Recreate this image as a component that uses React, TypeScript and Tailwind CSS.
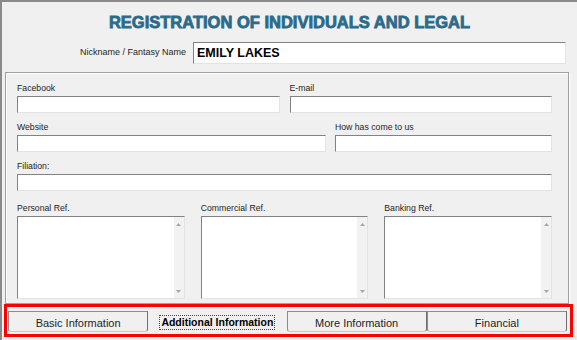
import type { ReactNode } from 'react';

const sunken =
  'bg-white border border-t-[#828282] border-l-[#828282] border-r-[#e3e3e3] border-b-[#e3e3e3]';

const Label = ({ children }: { children: ReactNode }) => (
  <div className="h-[12px] leading-[12px] text-[8.7px] text-[#1e1e1e] whitespace-nowrap">{children}</div>
);

const Field = ({ label }: { label: string }) => (
  <div className="flex flex-col gap-[2px]">
    <Label>{label}</Label>
    <div className={`h-[17px] ${sunken}`} />
  </div>
);

const Arrow = ({ up }: { up?: boolean }) => (
  <svg width="5" height="3" viewBox="0 0 5 3" className="block">
    <path d={up ? 'M0 3 L2.5 0 L5 3 Z' : 'M0 0 L2.5 3 L5 0 Z'} fill="#a6a6a6" />
  </svg>
);

const Memo = ({ label }: { label: string }) => (
  <div className="flex flex-col gap-[2px]">
    <Label>{label}</Label>
    <div className={`h-[83px] flex justify-end ${sunken}`}>
      <div className="w-[10px] h-full bg-[#f2f2f2] flex flex-col items-center justify-between pt-[6px] pb-[5px]">
        <Arrow up />
        <Arrow />
      </div>
    </div>
  </div>
);

const tabs = ['Basic Information', 'Additional Information', 'More Information', 'Financial'];

const App = () => {
  return (
    <div className="relative w-[577px] h-[340px] overflow-hidden bg-[#f0f0f0] border-t-2 border-l-2 border-[#8a8a8a] font-['Liberation_Sans',Arial,sans-serif]">
      <h1 className="mt-[10px] h-[20px] leading-[20px] text-center text-[16.5px] font-bold text-[#2a6a8a] [-webkit-text-stroke:0.8px_#2a6a8a]">
        REGISTRATION OF INDIVIDUALS AND LEGAL
      </h1>

      <div className="mt-[10px] flex items-center justify-end gap-[7px] pr-[11px]">
        <span className="text-[9px] text-[#1e1e1e]">Nickname / Fantasy Name</span>
        <div className={`w-[373px] h-[22px] flex items-center pl-[3px] ${sunken}`}>
          <span className="text-[12.5px] font-bold text-black">EMILY LAKES</span>
        </div>
      </div>

      <div className="mt-[8px] ml-[3px] w-[564px] h-[232px] border border-[#a0a0a0] shadow-[inset_1px_1px_0_#fff,1px_1px_0_#fff] pt-[9px] pl-[11px] pr-[16px]">
        <div className="grid grid-cols-2 gap-x-[10px]">
          <Field label="Facebook" />
          <Field label="E-mail" />
        </div>
        <div className="mt-[8px] grid grid-cols-[309px_1fr] gap-x-[9px]">
          <Field label="Website" />
          <Field label="How has come to us" />
        </div>
        <div className="mt-[8px]">
          <Field label="Filiation:" />
        </div>
        <div className="mt-[11px] grid grid-cols-3 gap-x-[16px]">
          <Memo label="Personal Ref." />
          <Memo label="Commercial Ref." />
          <Memo label="Banking Ref." />
        </div>
      </div>

      <div className="mt-[7px] ml-[6px] w-[559px] h-[21px] flex">
        {tabs.map((t, i) =>
          i === 1 ? (
            <div key={t} className="flex-1 flex items-start justify-center pt-[4px]">
              <span className="border border-dotted border-[#444] px-[1px] h-[15px] leading-[13px] text-[10.5px] font-bold text-black whitespace-nowrap">
                {t}
              </span>
            </div>
          ) : (
            <div
              key={t}
              className="flex-1 flex items-center justify-center pt-[3px] border border-t-[#8c8c8c] border-l-[#8c8c8c] border-r-[#6e6e6e] border-b-[#c8c8c8] rounded-b-[3px] text-[11px] text-[#1e1e1e] whitespace-nowrap"
            >
              {t}
            </div>
          )
        )}
      </div>

      <div className="absolute left-[2px] top-[302px] w-[569px] h-[33px] border-[3px] border-[#ff0000] pointer-events-none" />
    </div>
  );
};

export default App;
